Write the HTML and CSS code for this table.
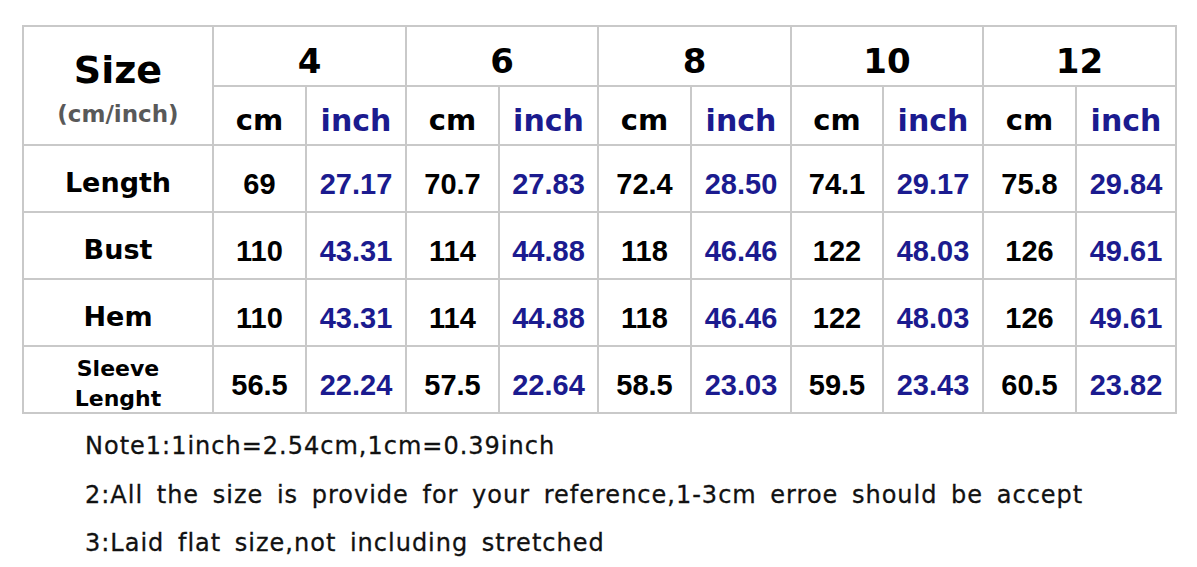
FILE: index.html
```html
<!DOCTYPE html>
<html>
<head>
<meta charset="utf-8">
<link rel="stylesheet" href="styles.css">
</head>
<body>
<div class="chart">
  <div class="cell corner"><span class="size-title">Size</span><span class="size-sub">(cm/inch)</span></div>
  <div class="cell size">4</div>
  <div class="cell size">6</div>
  <div class="cell size">8</div>
  <div class="cell size">10</div>
  <div class="cell size">12</div>
  <div class="cell unit">cm</div><div class="cell unit inch">inch</div>
  <div class="cell unit">cm</div><div class="cell unit inch">inch</div>
  <div class="cell unit">cm</div><div class="cell unit inch">inch</div>
  <div class="cell unit">cm</div><div class="cell unit inch">inch</div>
  <div class="cell unit">cm</div><div class="cell unit inch">inch</div>

  <div class="cell label">Length</div>
  <div class="cell num">69</div><div class="cell num blue">27.17</div>
  <div class="cell num">70.7</div><div class="cell num blue">27.83</div>
  <div class="cell num">72.4</div><div class="cell num blue">28.50</div>
  <div class="cell num">74.1</div><div class="cell num blue">29.17</div>
  <div class="cell num">75.8</div><div class="cell num blue">29.84</div>

  <div class="cell label">Bust</div>
  <div class="cell num">110</div><div class="cell num blue">43.31</div>
  <div class="cell num">114</div><div class="cell num blue">44.88</div>
  <div class="cell num">118</div><div class="cell num blue">46.46</div>
  <div class="cell num">122</div><div class="cell num blue">48.03</div>
  <div class="cell num">126</div><div class="cell num blue">49.61</div>

  <div class="cell label">Hem</div>
  <div class="cell num">110</div><div class="cell num blue">43.31</div>
  <div class="cell num">114</div><div class="cell num blue">44.88</div>
  <div class="cell num">118</div><div class="cell num blue">46.46</div>
  <div class="cell num">122</div><div class="cell num blue">48.03</div>
  <div class="cell num">126</div><div class="cell num blue">49.61</div>

  <div class="cell label small">Sleeve<br>Lenght</div>
  <div class="cell num">56.5</div><div class="cell num blue">22.24</div>
  <div class="cell num">57.5</div><div class="cell num blue">22.64</div>
  <div class="cell num">58.5</div><div class="cell num blue">23.03</div>
  <div class="cell num">59.5</div><div class="cell num blue">23.43</div>
  <div class="cell num">60.5</div><div class="cell num blue">23.82</div>
</div>
<div class="notes">
  <p>Note1:1inch=2.54cm,1cm=0.39inch</p>
  <p>2:All the size is provide for your reference,1-3cm erroe should be accept</p>
  <p>3:Laid flat size,not including stretched</p>
</div>
</body>
</html>
```

FILE: styles.css
```css
html, body {
  margin: 0;
  padding: 0;
  background: #fff;
}
body {
  width: 1197px;
  height: 567px;
  overflow: hidden;
  font-family: "Comic Sans MS", "DejaVu Sans", sans-serif;
  color: #000;
}
.chart {
  margin: 25px 0 0 22px;
  display: grid;
  grid-template-columns: 188px 91px 98px 91px 97px 91px 98px 90px 98px 91px 98px;
  grid-template-rows: 58px 57px 65px 65px 65px 65px;
  gap: 2px;
  padding: 2px;
  background: #c9c9c9;
  width: max-content;
}
.cell {
  background: #fff;
  display: flex;
  align-items: center;
  justify-content: center;
  text-align: center;
  font-weight: 700;
}
.corner {
  grid-row: span 2;
  flex-direction: column;
  line-height: 1;
  padding-top: 6px;
}
.size-title {
  font-size: 38px;
  margin-bottom: 14px;
}
.size-sub {
  font-size: 23px;
  color: #595959;
}
.size {
  grid-column: span 2;
  font-size: 34px;
  padding-top: 9px;
}
.unit {
  font-size: 29px;
  padding-top: 9px;
}
.unit.inch {
  color: #1b1b8f;
  font-size: 30px;
}
.label {
  font-size: 27px;
  padding-top: 8px;
}
.label.small {
  font-size: 22px;
  line-height: 30px;
  padding-top: 8px;
}
.num {
  font-family: "Liberation Sans", Arial, sans-serif;
  font-size: 29px;
  padding-top: 12px;
}
.num.blue {
  color: #1b1b8f;
}
.notes {
  margin: 8px 0 0 85px;
  font-size: 24px;
  letter-spacing: 1px;
  word-spacing: 5px;
  color: #111;
  -webkit-text-stroke: 0.3px #111;
}
.notes p {
  margin: 0;
  line-height: 48.5px;
}
```
